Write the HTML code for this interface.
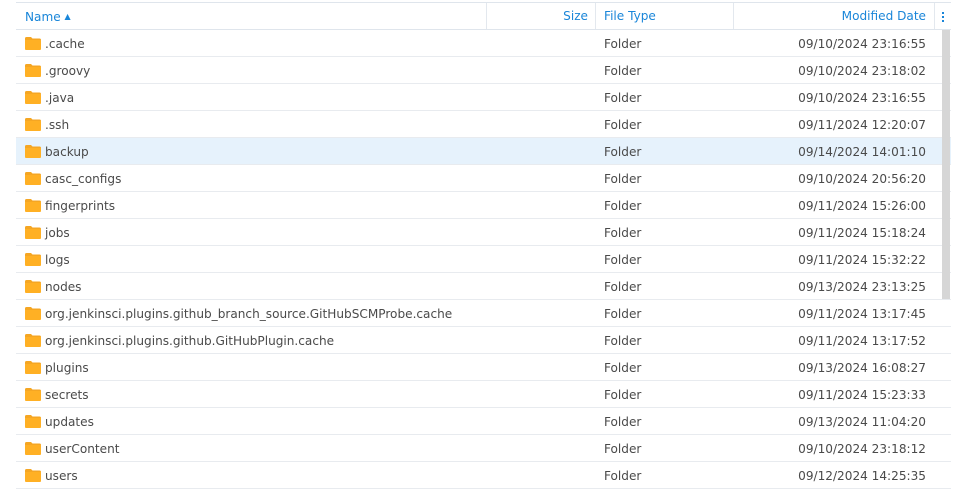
<!DOCTYPE html>
<html><head><meta charset="utf-8"><style>
body{margin:0;width:953px;height:489px;background:#fff;overflow:hidden;font-family:"DejaVu Sans",Verdana,sans-serif;font-size:12.1px;color:#4a4a4a;position:relative}
.hd{position:absolute;left:16px;top:2px;width:935px;height:26px;border-top:1px solid #dfe5ec;border-bottom:1px solid #dfe5ec;color:#1a86d9}
.hd div{position:absolute;top:0;height:26px;line-height:27px}
.vl{position:absolute;top:0;width:1px;height:26px;background:#e3e8ee}
.row{position:absolute;left:16px;width:935px;height:26px;border-bottom:1px solid #e8ebef;line-height:27px}
.row.sel{background:#e6f2fc}
.row span{position:absolute;top:1px}
.ic{position:absolute;left:9px;top:7px;width:16px;height:13px}
.nm{left:29px}.ty{left:588px}.dt{right:25px}
.sb{position:absolute;left:942px;top:30px;width:8px;height:269px;background:#d6d6d6}
</style></head><body>
<div class="hd">
<div style="left:9px">Name <span style="font-size:8px;vertical-align:2px">&#9650;</span></div>
<div class="vl" style="left:470px"></div>
<div style="right:363px">Size</div>
<div class="vl" style="left:579px"></div>
<div style="left:588px">File Type</div>
<div class="vl" style="left:717px"></div>
<div style="right:25px">Modified Date</div>
<div class="vl" style="left:918px"></div>
<div style="left:926px;top:9px;height:auto;line-height:0"><svg width="3" height="10"><rect x="0" y="0" width="2" height="2" fill="#1a86d9"/><rect x="0" y="4" width="2" height="2" fill="#1a86d9"/><rect x="0" y="8" width="2" height="2" fill="#1a86d9"/></svg></div>
</div>
<div id="rows"></div>
<div class="sb"></div>
<script>
var d=[[".cache","09/10/2024 23:16:55"],[".groovy","09/10/2024 23:18:02"],[".java","09/10/2024 23:16:55"],[".ssh","09/11/2024 12:20:07"],["backup","09/14/2024 14:01:10"],["casc_configs","09/10/2024 20:56:20"],["fingerprints","09/11/2024 15:26:00"],["jobs","09/11/2024 15:18:24"],["logs","09/11/2024 15:32:22"],["nodes","09/13/2024 23:13:25"],["org.jenkinsci.plugins.github_branch_source.GitHubSCMProbe.cache","09/11/2024 13:17:45"],["org.jenkinsci.plugins.github.GitHubPlugin.cache","09/11/2024 13:17:52"],["plugins","09/13/2024 16:08:27"],["secrets","09/11/2024 15:23:33"],["updates","09/13/2024 11:04:20"],["userContent","09/10/2024 23:18:12"],["users","09/12/2024 14:25:35"]];
var h="";d.forEach(function(r,i){h+='<div class="row'+(i==4?' sel':'')+'" style="top:'+(30+27*i)+'px"><svg class="ic" viewBox="0 0 16 13"><path d="M0 1.5Q0 0 1.5 0H6L7.5 1.5H14.5Q16 1.5 16 3V3.5H0Z" fill="#f5a623"/><rect x="0" y="3" width="16" height="10" rx="1" fill="#ffb024"/></svg><span class="nm">'+r[0]+'</span><span class="ty">Folder</span><span class="dt">'+r[1]+'</span></div>';});
document.getElementById("rows").innerHTML=h;
</script>
</body></html>
